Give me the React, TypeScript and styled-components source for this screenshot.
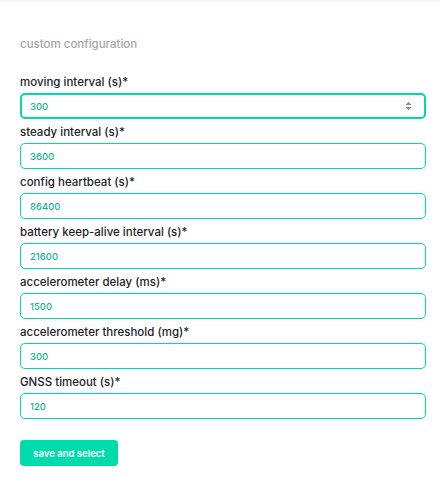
import styled, { createGlobalStyle } from "styled-components";
import { useState } from "react";

const fields = [
  { name: "moving", label: "moving interval (s)*", value: "300" },
  { name: "steady", label: "steady interval (s)*", value: "3600" },
  { name: "heartbeat", label: "config heartbeat (s)*", value: "86400" },
  { name: "keepAlive", label: "battery keep-alive interval (s)*", value: "21600" },
  { name: "accDelay", label: "accelerometer delay (ms)*", value: "1500" },
  { name: "accThreshold", label: "accelerometer threshold (mg)*", value: "300" },
  { name: "gnss", label: "GNSS timeout (s)*", value: "120" },
];

export default function App() {
  const [values, setValues] = useState<Record<string, string>>(
    Object.fromEntries(fields.map((f) => [f.name, f.value]))
  );

  return (
    <Page>
      <GlobalStyle />
      <Title>custom configuration</Title>
      <Form onSubmit={(e) => e.preventDefault()}>
        {fields.map((field, i) => (
          <Field key={field.name}>
            <Label htmlFor={field.name}>{field.label}</Label>
            <Input
              id={field.name}
              type="number"
              $focused={i === 0}
              autoFocus={i === 0}
              value={values[field.name]}
              onChange={(e) =>
                setValues((v) => ({ ...v, [field.name]: e.target.value }))
              }
            />
          </Field>
        ))}
        <Button type="submit">save and select</Button>
      </Form>
    </Page>
  );
}

const GlobalStyle = createGlobalStyle`
  body {
    margin: 0;
    background: #ffffff;
    font-family: "Inter", "Noto Sans", sans-serif;
  }
`;

const Page = styled.div`
  border-top: 2px solid #f4f4f6;
  padding: 33px 14px 25px 20px;
`;

const Title = styled.h2`
  margin: 0 0 20px;
  font-size: 11.5px;
  font-weight: 500;
  color: #a3a5ae;
  line-height: 18px;
`;

const Form = styled.form`
  display: flex;
  flex-direction: column;
`;

const Field = styled.div`
  display: flex;
  flex-direction: column;
  margin-bottom: 4px;
`;

const Label = styled.label`
  font-size: 11.5px;
  font-weight: 500;
  color: #1d1d29;
  line-height: 18px;
  margin-bottom: 2px;
`;

const Input = styled.input<{ $focused?: boolean }>`
  box-sizing: border-box;
  height: 26px;
  width: 100%;
  padding: 0 ${(p) => (p.$focused ? "8px" : "9px")};
  border: ${(p) => (p.$focused ? "2px" : "1px")} solid #00d9a8;
  border-radius: 5px;
  font-family: inherit;
  font-size: 9.5px;
  font-weight: 500;
  color: #18b48f;
  outline: none;
  background: #fff;
`;

const Button = styled.button`
  align-self: flex-start;
  margin-top: 17px;
  height: 26px;
  width: 98px;
  border: none;
  border-radius: 4px;
  background: #00dbab;
  color: #fff;
  font-family: inherit;
  font-size: 9.5px;
  font-weight: 600;
  cursor: pointer;
`;
